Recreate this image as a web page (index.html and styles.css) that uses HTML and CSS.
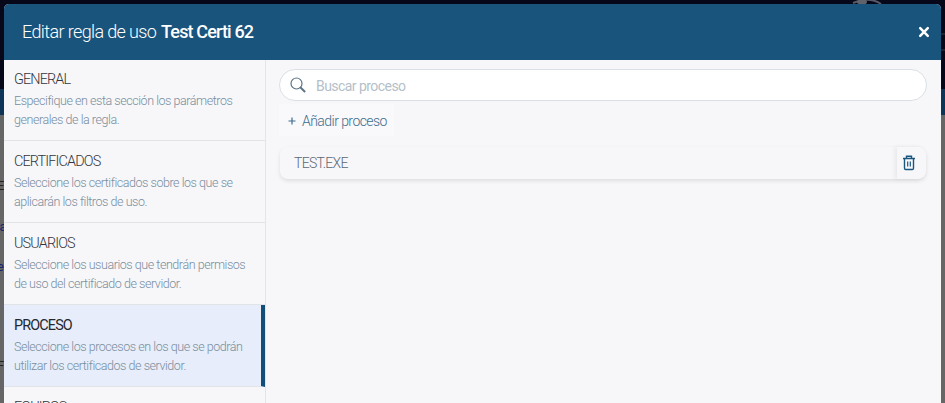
FILE: index.html
```html
<!DOCTYPE html>
<html lang="es">
<head>
<meta charset="utf-8">
<title>Editar regla de uso</title>
<link rel="stylesheet" href="styles.css">
</head>
<body>
<div class="backdrop" aria-hidden="true">
  <svg class="orbit" width="945" height="60" viewBox="0 0 945 60" fill="none"><path d="M853 3Q869-4 881 4" stroke="#555a66" stroke-width="2"/><ellipse cx="862" cy="2" rx="5" ry="3" fill="#60636b"/><path d="M941 34h4M941 50h4" stroke="#343b49"/></svg>
  <span class="peek p1">E</span><span class="peek p2 link">la</span><span class="peek p3 link">e</span><span class="peek p4">F</span>
</div>
<main class="modal">
  <header class="header">
    <h1 class="title">Editar regla de uso <b>Test Certi 62</b></h1>
    <svg class="close" width="12" height="12" viewBox="0 0 12 12"><path d="M2.2 2.2l7.6 7.6M9.8 2.2L2.2 9.8" stroke="#fff" stroke-width="2.5" stroke-linecap="round"/></svg>
  </header>
  <div class="body">
    <nav class="sections">
      <section class="item"><h2>GENERAL</h2><p>Especifique en esta sección los parámetros<br>generales de la regla.</p></section>
      <section class="item"><h2>CERTIFICADOS</h2><p>Seleccione los certificados sobre los que se<br>aplicarán los filtros de uso.</p></section>
      <section class="item"><h2>USUARIOS</h2><p>Seleccione los usuarios que tendrán permisos<br>de uso del certificado de servidor.</p></section>
      <section class="item active"><h2>PROCESO</h2><p>Seleccione los procesos en los que se podrán<br>utilizar los certificados de servidor.</p></section>
      <section class="item"><h2>EQUIPOS</h2></section>
    </nav>
    <div class="content">
      <div class="search">
        <svg width="16" height="16" viewBox="0 0 16 16" fill="none" stroke="#5d7485" stroke-linecap="round"><circle cx="6.5" cy="6.5" r="5.5" stroke-width="1.2"/><path d="M10.8 10.8l3.8 3.6" stroke-width="2"/></svg>
        <span>Buscar proceso</span>
      </div>
      <div class="add"><svg width="8" height="8" viewBox="0 0 8 8"><path d="M4 .5v7M.5 4h7" stroke="#3d6c8c" stroke-width="1.2"/></svg><span>Añadir proceso</span></div>
      <div class="process">
        <span class="name">TEST.EXE</span>
        <div class="trash"><svg width="14" height="16" viewBox="0 0 14 16" fill="none" stroke="#1b5680" stroke-width="1.4"><path d="M1 3.5h12M4.5 3V1.2h5V3M2.5 4v9.3q0 1.2 1.2 1.2h6.6q1.2 0 1.2-1.2V4"/><path d="M5.7 6.5v5M8.3 6.5v5" stroke-width="1.2"/></svg></div>
      </div>
    </div>
  </div>
</main>
</body>
</html>
```
FILE: styles.css
```css
* { box-sizing: border-box; }
body {
  margin: 0;
  height: 403px;
  overflow: hidden;
  position: relative;
  font-family: Roboto, "Noto Sans", sans-serif;
  letter-spacing: -0.55px;
}
.backdrop {
  position: absolute;
  inset: 0;
  background: linear-gradient(#060819 0 89px, #0d3557 89px 115px, #666 115px);
}
.orbit { position: absolute; left: 0; top: 0; }
.peek { position: absolute; left: -3px; font-size: 13px; color: #222; }
.p1 { top: 178px; }
.p2 { top: 219px; }
.p3 { top: 259px; }
.p4 { top: 358px; }
.link { color: #15246b; }
.modal {
  position: relative;
  margin: 4px 4px 0;
  width: 937px;
  height: 399px;
  display: flex;
  flex-direction: column;
  background: #f7f7fa;
  border-radius: 5px 5px 0 0;
  overflow: hidden;
}
.header {
  height: 56px;
  flex: none;
  display: flex;
  align-items: center;
  justify-content: space-between;
  padding: 0 11px 0 18px;
  background: #19547c;
  color: #fff;
}
.title { margin: -2px 0 0; font-size: 18px; font-weight: 300; letter-spacing: -0.62px; white-space: nowrap; }
.title b { font-weight: 500; letter-spacing: -0.85px; margin-left: 1px; }
.body { display: flex; flex: 1; min-height: 0; }
.sections { width: 262px; flex: none; border-right: 1px solid #e4e5e9; }
.item {
  height: 82px;
  padding: 11px 0 0 10px;
  border-bottom: 1px solid #e2e3e6;
  white-space: nowrap;
}
.item:first-child { height: 81px; padding-top: 10px; }
.item h2 { margin: 0; font-size: 14.4px; line-height: 20px; font-weight: 300; letter-spacing: -0.85px; color: #33363b; }
.item p { margin: 1px 0 0; font-size: 12.5px; line-height: 19px; font-weight: 350; letter-spacing: -0.45px; color: #788d9d; }
.item.active { background: #e7edfa; border-right: 4px solid #124e78; }
.item.active h2 { font-weight: 450; color: #24272d; }
.content { flex: 1; padding: 9px 14px 0 13px; }
.search {
  height: 32px;
  display: flex;
  align-items: center;
  gap: 9px;
  padding-left: 10px;
  border: 1px solid #d9dfe4;
  border-radius: 16px;
  background: #fff;
  font-size: 14px;
  color: #b4bfc8;
}
.search span { padding-left: 1px; }
.search span, .add span { padding-top: 1px; }
.add {
  width: 115px;
  height: 32px;
  margin-top: 3px;
  display: flex;
  align-items: center;
  gap: 6px;
  padding-left: 9px;
  background: #f9f9fb;
  font-size: 14px;
  font-weight: 350;
  color: #3f6d8d;
  white-space: nowrap;
}
.add svg { flex: none; margin-top: 1px; }
.process {
  height: 32px;
  margin: 11px 1px 0;
  display: flex;
  align-items: center;
  justify-content: space-between;
  padding-left: 14px;
  border-radius: 8px;
  box-shadow: 0 2px 4px #0000001a;
  font-size: 14px;
  font-weight: 350;
  letter-spacing: -0.7px;
  color: #5b6976;
}
.trash {
  width: 29px;
  height: 32px;
  display: flex;
  align-items: center;
  justify-content: center;
  padding-right: 5px;
  border-radius: 0 8px 8px 0;
  box-shadow: -2px 0 5px #0001;
}
```
